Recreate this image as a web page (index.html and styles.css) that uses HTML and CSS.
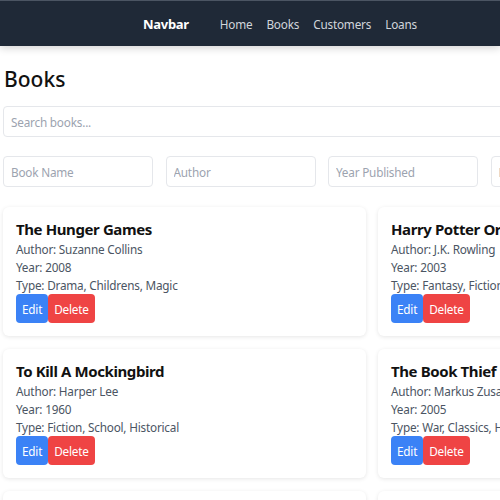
FILE: index.html
```html
<!DOCTYPE html>
<html lang="en">
<head>
<meta charset="utf-8">
<title>Books</title>
<link rel="stylesheet" href="styles.css">
</head>
<body>
<nav class="navbar">
  <span class="brand">Navbar</span>
  <ul class="nav-links">
    <li>Home</li>
    <li>Books</li>
    <li>Customers</li>
    <li>Loans</li>
  </ul>
</nav>
<main class="page">
  <h1 class="page-title">Books</h1>
  <input class="field search" type="text" placeholder="Search books...">
  <div class="filters">
    <input class="field" type="text" placeholder="Book Name">
    <input class="field" type="text" placeholder="Author">
    <input class="field" type="text" placeholder="Year Published">
    <input class="field" type="text" placeholder="Book Type">
  </div>
  <div class="cards">
    <div class="card">
      <h2 class="card-title">The Hunger Games</h2>
      <p class="card-line">Author: Suzanne Collins</p>
      <p class="card-line">Year: 2008</p>
      <p class="card-line">Type: Drama, Childrens, Magic</p>
      <div class="actions"><button class="btn btn-edit">Edit</button><button class="btn btn-delete">Delete</button></div>
    </div>
    <div class="card">
      <h2 class="card-title">Harry Potter Order of the Phoenix</h2>
      <p class="card-line">Author: J.K. Rowling</p>
      <p class="card-line">Year: 2003</p>
      <p class="card-line">Type: Fantasy, Fiction, Magic</p>
      <div class="actions"><button class="btn btn-edit">Edit</button><button class="btn btn-delete">Delete</button></div>
    </div>
    <div class="card">
      <h2 class="card-title">To Kill A Mockingbird</h2>
      <p class="card-line">Author: Harper Lee</p>
      <p class="card-line">Year: 1960</p>
      <p class="card-line">Type: Fiction, School, Historical</p>
      <div class="actions"><button class="btn btn-edit">Edit</button><button class="btn btn-delete">Delete</button></div>
    </div>
    <div class="card">
      <h2 class="card-title">The Book Thief</h2>
      <p class="card-line">Author: Markus Zusak</p>
      <p class="card-line">Year: 2005</p>
      <p class="card-line">Type: War, Classics, Historical</p>
      <div class="actions"><button class="btn btn-edit">Edit</button><button class="btn btn-delete">Delete</button></div>
    </div>
    <div class="card">
      <h2 class="card-title">Pride and Prejudice</h2>
      <p class="card-line">Author: Jane Austen</p>
      <p class="card-line">Year: 1813</p>
      <p class="card-line">Type: Romance, Classics</p>
      <div class="actions"><button class="btn btn-edit">Edit</button><button class="btn btn-delete">Delete</button></div>
    </div>
    <div class="card">
      <h2 class="card-title">Animal Farm</h2>
      <p class="card-line">Author: George Orwell</p>
      <p class="card-line">Year: 1945</p>
      <p class="card-line">Type: Satire, Classics</p>
      <div class="actions"><button class="btn btn-edit">Edit</button><button class="btn btn-delete">Delete</button></div>
    </div>
  </div>
</main>
</body>
</html>
```

FILE: styles.css
```css
html, body {
  margin: 0;
  padding: 0;
  overflow: hidden;
  background: #ffffff;
  font-family: "Noto Sans", "Open Sans", sans-serif;
}

.navbar {
  box-sizing: border-box;
  height: 46px;
  border-top: 1px solid #4b5563;
  padding-top: 1px;
  padding-left: 143px;
  background: #1f2937;
  box-shadow: 0 2px 8px rgba(0, 0, 0, 0.18);
  display: flex;
  align-items: center;
  position: relative;
  z-index: 1;
}

.brand {
  color: #ffffff;
  font-weight: 700;
  font-size: 13px;
  letter-spacing: -0.3px;
  margin-right: 31px;
}

.nav-links {
  display: flex;
  gap: 14px;
  list-style: none;
  margin: 0;
  padding: 0;
  color: #d1d5db;
  font-size: 11.75px;
  letter-spacing: -0.2px;
}

.page {
  width: 740px;
  padding: 17px 4px 40px 3px;
}

.page-title {
  margin: 0 0 11px 1px;
  font-size: 21px;
  font-weight: 500;
  line-height: 32px;
  color: #111111;
}

.field {
  box-sizing: border-box;
  height: 31px;
  border: 1px solid #e5e7eb;
  border-radius: 4px;
  padding: 0 7px;
  font-family: inherit;
  font-size: 11.75px;
  letter-spacing: -0.2px;
  color: #374151;
  background: #ffffff;
  outline: none;
  display: block;
}

.field::placeholder {
  color: #9ca3af;
}

.search {
  width: 637px;
}

.filters {
  display: grid;
  grid-template-columns: repeat(4, 150px);
  column-gap: 12.5px;
  margin-top: 19px;
}

.filters .field {
  width: 100%;
}

.cards {
  display: grid;
  grid-template-columns: repeat(2, 363px);
  column-gap: 12px;
  row-gap: 13px;
  margin-top: 20px;
}

.card {
  background: #ffffff;
  border-radius: 6px;
  box-shadow: 0 1px 4px rgba(0, 0, 0, 0.1);
  padding: 12px 13px 13px;
}

.card-title {
  margin: 0 0 1px;
  font-size: 15px;
  letter-spacing: -0.4px;
  font-weight: 700;
  line-height: 20px;
  color: #111111;
}

.card-line {
  margin: 0;
  font-size: 11.75px;
  letter-spacing: -0.2px;
  line-height: 18px;
  color: #4b5563;
}

.actions {
  display: flex;
}

.btn {
  height: 29px;
  padding: 0 6px;
  border: none;
  border-radius: 4px;
  font-family: inherit;
  font-size: 11.75px;
  letter-spacing: -0.2px;
  color: #ffffff;
}

.btn-edit {
  background: #3b82f6;
}

.btn-delete {
  background: #ef4444;
}
```
